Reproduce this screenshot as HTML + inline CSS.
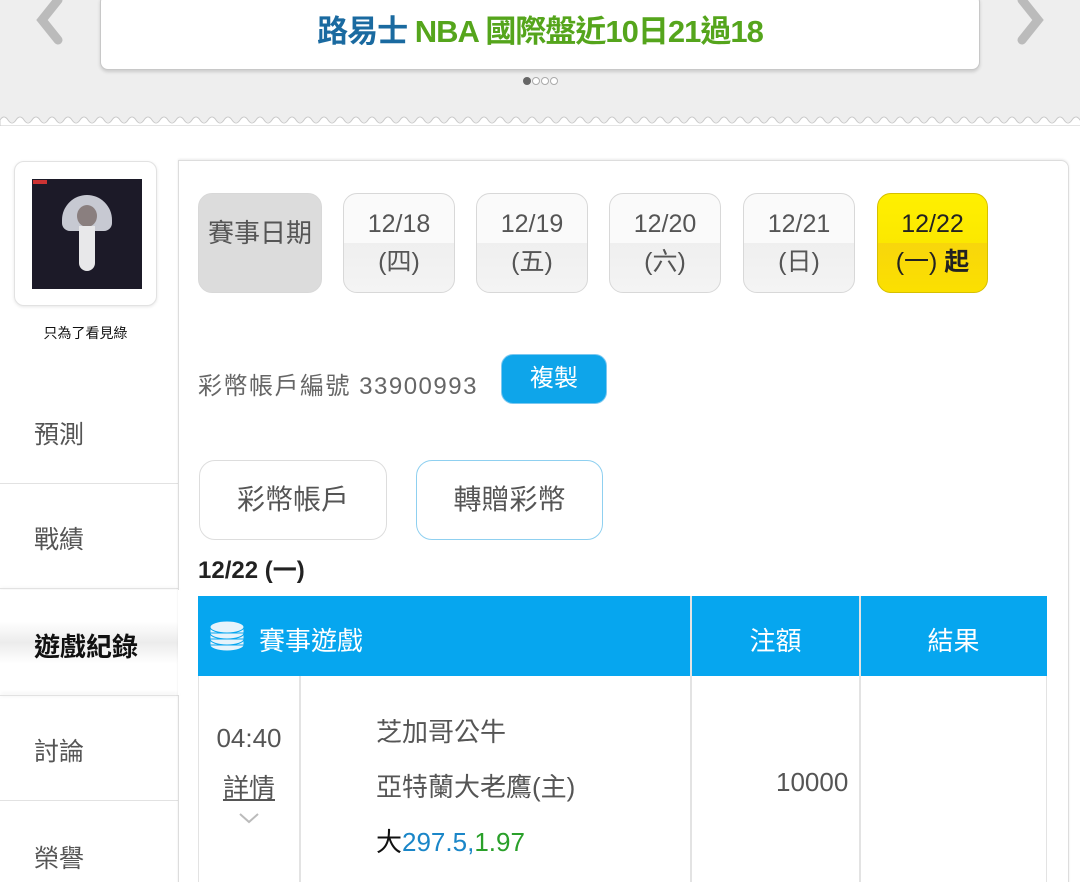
<!DOCTYPE html>
<html><head><meta charset="utf-8"><style>
*{margin:0;padding:0;box-sizing:border-box}
html,body{width:1080px;height:882px;overflow:hidden}
body{background:#fff;font-family:"Liberation Sans","Noto Sans CJK TC",sans-serif;position:relative;color:#555}
.abs{position:absolute}
.top{left:0;top:0;width:1080px;height:122px;background:#eeeeee}
.banner{left:100px;top:-6px;width:880px;height:76px;background:#fff;border:1px solid #c8c8c8;border-radius:8px;box-shadow:0 2px 3px rgba(0,0,0,.15);text-align:center;font-size:31px;letter-spacing:-1px;font-weight:bold;line-height:70px;padding-top:2px}
.date{top:193px;width:112px;height:100px;border:1px solid #d8d8d8;border-radius:14px;background:linear-gradient(#fafafa 0,#fafafa 50%,#efefef 50%,#f4f4f4 100%);text-align:center;font-size:25px;color:#555;line-height:38px;padding-top:11px}
.menu{left:34px;font-size:25px;color:#555}
.sep{left:0;width:178px;height:1px;background:#e2e2e2}
.btn{top:460px;height:80px;border-radius:16px;font-size:28px;color:#555;text-align:center;line-height:78px}
</style></head><body>
<div class="abs top"></div>
<svg class="abs" style="left:0;top:112px" width="1080" height="14"><path d="M0 8 q4 -6 8 0 t8 0 t8 0 t8 0 t8 0 t8 0 t8 0 t8 0 t8 0 t8 0 t8 0 t8 0 t8 0 t8 0 t8 0 t8 0 t8 0 t8 0 t8 0 t8 0 t8 0 t8 0 t8 0 t8 0 t8 0 t8 0 t8 0 t8 0 t8 0 t8 0 t8 0 t8 0 t8 0 t8 0 t8 0 t8 0 t8 0 t8 0 t8 0 t8 0 t8 0 t8 0 t8 0 t8 0 t8 0 t8 0 t8 0 t8 0 t8 0 t8 0 t8 0 t8 0 t8 0 t8 0 t8 0 t8 0 t8 0 t8 0 t8 0 t8 0 t8 0 t8 0 t8 0 t8 0 t8 0 t8 0 t8 0 t8 0 t8 0 t8 0 t8 0 t8 0 t8 0 t8 0 t8 0 t8 0 t8 0 t8 0 t8 0 t8 0 t8 0 t8 0 t8 0 t8 0 t8 0 t8 0 t8 0 t8 0 t8 0 t8 0 t8 0 t8 0 t8 0 t8 0 t8 0 t8 0 t8 0 t8 0 t8 0 t8 0 t8 0 t8 0 t8 0 t8 0 t8 0 t8 0 t8 0 t8 0 t8 0 t8 0 t8 0 t8 0 t8 0 t8 0 t8 0 t8 0 t8 0 t8 0 t8 0 t8 0 t8 0 t8 0 t8 0 t8 0 t8 0 t8 0 t8 0 t8 0 t8 0 t8 0 t8 0 t8 0 t8 0 t8 0 t8 0 t8 0 t8 0 t8 0 t8 0 t8 0 t8 0 t8 0 L1080 14 L0 14Z" fill="#fff" stroke="#c8c8c8" stroke-width="1"/></svg>
<svg class="abs" style="left:30px;top:0" width="35" height="45"><path d="M28 0 L12 20 L28 40" fill="none" stroke="#bbb" stroke-width="9" stroke-linecap="round"/></svg>
<svg class="abs" style="left:1015px;top:0" width="35" height="45"><path d="M7 0 L23 20 L7 40" fill="none" stroke="#bbb" stroke-width="9" stroke-linecap="round"/></svg>
<div class="abs banner"><span style="color:#1a6aa0">路易士</span> <span style="color:#55a51c">NBA 國際盤近10日21過18</span></div>
<div class="abs" style="left:523px;top:77px;width:8px;height:8px;border-radius:50%;background:#666"></div>
<div class="abs" style="left:532px;top:77px;width:8px;height:8px;border-radius:50%;border:1px solid #aaa;background:#fff"></div>
<div class="abs" style="left:541px;top:77px;width:8px;height:8px;border-radius:50%;border:1px solid #aaa;background:#fff"></div>
<div class="abs" style="left:550px;top:77px;width:8px;height:8px;border-radius:50%;border:1px solid #aaa;background:#fff"></div>

<div class="abs" style="left:14px;top:161px;width:143px;height:145px;border:1px solid #e2e2e2;border-radius:10px;background:#fff;box-shadow:0 1px 3px rgba(0,0,0,.1)"></div>
<div class="abs" style="left:32px;top:179px;width:110px;height:110px;background:#1c1a28"></div>
<div class="abs" style="left:62px;top:195px;width:50px;height:36px;border-radius:25px 25px 8px 8px;background:#c7c9d2"></div>
<div class="abs" style="left:77px;top:205px;width:20px;height:22px;border-radius:50%;background:#8a7f7f"></div>
<div class="abs" style="left:79px;top:226px;width:16px;height:45px;background:#e8e8ea;border-radius:0 0 8px 8px"></div>
<div class="abs" style="left:33px;top:180px;width:14px;height:4px;background:#c33"></div>
<div class="abs" style="left:14px;top:323px;width:143px;text-align:center;font-size:14px;color:#111">只為了看見綠</div>

<div class="abs menu" style="top:415px">預測</div>
<div class="abs sep" style="top:483px"></div>
<div class="abs menu" style="top:520px">戰績</div>
<div class="abs sep" style="top:588px;box-shadow:0 1px 4px rgba(0,0,0,.15)"></div>
<div class="abs" style="left:0;top:590px;width:180px;height:105px;background:linear-gradient(#fff 30%,#ececec 50%,#fff 70%)"></div>
<div class="abs menu" style="top:627px;color:#111;font-weight:bold;font-size:26px">遊戲紀錄</div>
<div class="abs sep" style="top:695px;box-shadow:0 -1px 4px rgba(0,0,0,.15)"></div>
<div class="abs menu" style="top:732px">討論</div>
<div class="abs sep" style="top:800px"></div>
<div class="abs menu" style="top:839px">榮譽</div>

<div class="abs" style="left:178px;top:160px;width:891px;height:740px;border:1px solid #ddd;border-radius:0 8px 0 0;box-shadow:0 -1px 2px rgba(0,0,0,.08)"></div>
<div class="abs" style="left:178px;top:590px;width:2px;height:105px;background:#fff"></div>

<div class="abs date" style="left:198px;width:124px;background:#dcdcdc;line-height:78px;padding-top:0;font-size:26px">賽事日期</div>
<div class="abs date" style="left:343px">12/18<br>(四)</div>
<div class="abs date" style="left:476px">12/19<br>(五)</div>
<div class="abs date" style="left:609px">12/20<br>(六)</div>
<div class="abs date" style="left:743px">12/21<br>(日)</div>
<div class="abs date" style="left:877px;width:111px;background:linear-gradient(#fff000 0,#fbe800 50%,#f8d60c 50%,#fbe000 100%);border-color:#d6c000;color:#222">12/22<br>(一) <b>起</b></div>

<div class="abs" style="left:198px;top:366px;font-size:24px;letter-spacing:1.5px;color:#666">彩幣帳戶編號 33900993</div>
<div class="abs" style="left:501px;top:354px;width:106px;height:50px;border-radius:12px;background:#0ea5ea;border:1px solid #7cc8f0;color:#fff;font-size:24px;text-align:center;line-height:48px">複製</div>

<div class="abs btn" style="left:199px;width:188px;border:1px solid #ddd">彩幣帳戶</div>
<div class="abs btn" style="left:416px;width:187px;border:1px solid #8fd0f0">轉贈彩幣</div>
<div class="abs" style="left:198px;top:550px;font-size:24px;font-weight:bold;color:#222">12/22 (一)</div>

<div class="abs" style="left:198px;top:596px;width:849px;height:80px;background:#06a6ef"></div>
<div class="abs" style="left:690px;top:596px;width:2px;height:286px;background:#e3e3e3"></div>
<div class="abs" style="left:859px;top:596px;width:2px;height:286px;background:#e3e3e3"></div>
<div class="abs" style="left:1046px;top:676px;width:1px;height:206px;background:#e3e3e3"></div>
<div class="abs" style="left:198px;top:676px;width:1px;height:206px;background:#e3e3e3"></div>
<div class="abs" style="left:299px;top:676px;width:2px;height:206px;background:#e3e3e3"></div>
<svg class="abs" style="left:209px;top:620px" width="36" height="32"><g fill="#e6f3fb" stroke="#06a6ef" stroke-width="1"><ellipse cx="18" cy="25" rx="17" ry="6"/><rect x="1" y="19" width="34" height="6"/><ellipse cx="18" cy="19" rx="17" ry="6"/><rect x="1" y="13" width="34" height="6"/><ellipse cx="18" cy="13" rx="17" ry="6"/><rect x="1" y="7" width="34" height="6"/><ellipse cx="18" cy="7" rx="17" ry="6"/></g></svg>
<div class="abs" style="left:259px;top:621px;font-size:26px;color:#fff">賽事遊戲</div>
<div class="abs" style="left:692px;top:621px;width:167px;text-align:center;font-size:26px;color:#fff">注額</div>
<div class="abs" style="left:861px;top:621px;width:185px;text-align:center;font-size:26px;color:#fff">結果</div>

<div class="abs" style="left:199px;top:723px;width:100px;text-align:center;font-size:26px;color:#555">04:40</div>
<div class="abs" style="left:199px;top:768px;width:100px;text-align:center;font-size:26px;color:#555;text-decoration:underline">詳情</div>
<svg class="abs" style="left:238px;top:812px" width="22" height="14"><path d="M2 2 L11 10 L20 2" fill="none" stroke="#bbb" stroke-width="2"/></svg>
<div class="abs" style="left:376px;top:712px;font-size:26px;color:#555">芝加哥公牛</div>
<div class="abs" style="left:376px;top:767px;font-size:26px;color:#555">亞特蘭大老鷹(主)</div>
<div class="abs" style="left:376px;top:822px;font-size:26px;color:#111">大<span style="color:#1a86c8">297.5,</span><span style="color:#2aa02a">1.97</span></div>
<div class="abs" style="left:776px;top:767px;font-size:26px;color:#555">10000</div>
</body></html>
